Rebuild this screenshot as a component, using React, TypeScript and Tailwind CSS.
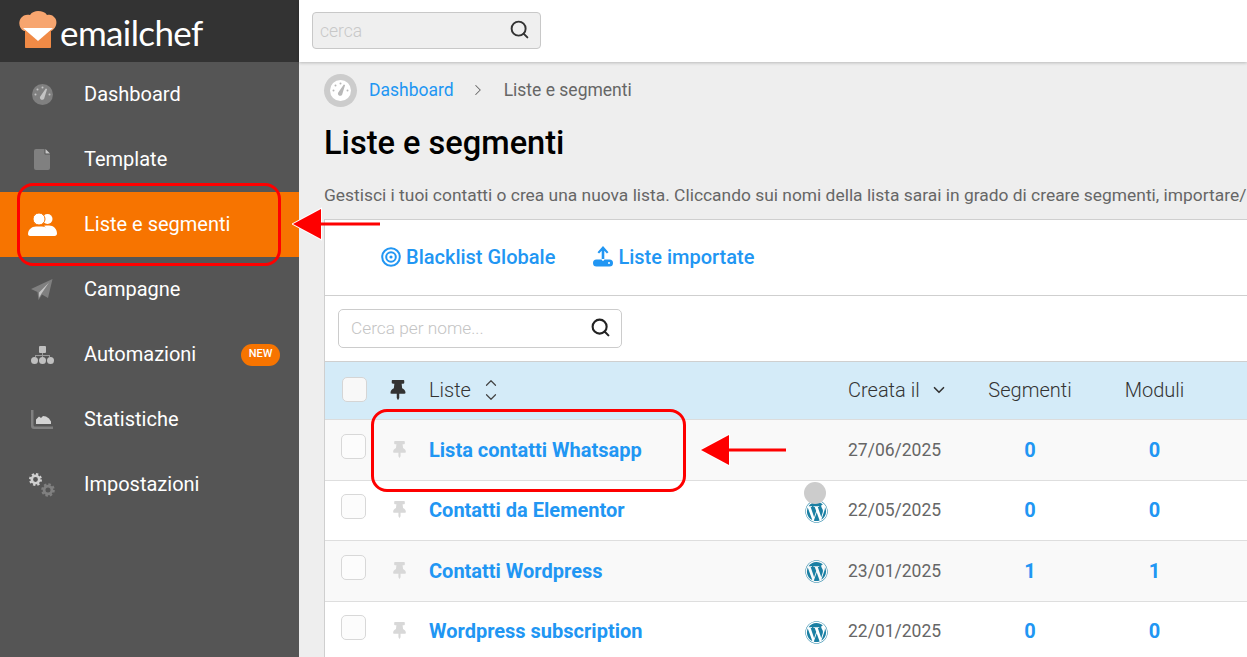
import { ChevronDown, ChevronRight, ChevronUp, Search } from 'lucide-react'
import { FaThumbtack, FaWordpress } from 'react-icons/fa'
import type { ReactNode } from 'react'

function GaugeIcon({ bg, fg }: { bg: string; fg: string }) {
    return (
        <svg width="21" height="21" viewBox="0 0 21 21">
            <circle cx="10.500" cy="10.500" r="10.500" fill={bg} />
            <g fill={fg}>
                <circle cx="10.500" cy="3.500" r="1" />
                <circle cx="5.500" cy="5.500" r="1" />
                <circle cx="3.500" cy="10.500" r="1" />
                <circle cx="17.500" cy="10.500" r="1" />
                <path d="M13.800 4.500l1.300.6-2.600 8.500a2.300 2.300 0 1 1-3.900-1.700Z" />
            </g>
        </svg>
    )
}

function FileIcon() {
    return (
        <svg width="16" height="21" viewBox="0 0 16 21">
            <path d="M2 0h8.500v4.500c0 .6.400 1 1 1H16V19a2 2 0 0 1-2 2H2a2 2 0 0 1-2-2V2a2 2 0 0 1 2-2Z" fill="#808080" />
            <path d="M11.500 0L16 4.500h-4.500Z" fill="#c8c8c8" />
        </svg>
    )
}

function UsersIcon() {
    return (
        <svg width="29" height="23" viewBox="0 0 29 23" fill="#ffffff">
            <circle cx="19.500" cy="6" r="5" />
            <path d="M21 12.500c4.500 0 8 3.500 8 8 0 1.400-1 2.500-2.400 2.500H20c.5-4-1-8-4-10.200 1.400-.2 3.300-.3 5-.3Z" />
            <circle cx="11" cy="6" r="6" stroke="#f77400" strokeWidth="1" />
            <path d="M8 13.500h6c4.400 0 8 3.400 8 7.500 0 1.100-.9 2-2 2H2c-1.100 0-2-.9-2-2 0-4.100 3.600-7.500 8-7.500Z" />
        </svg>
    )
}

function PlaneIcon() {
    return (
        <svg width="22" height="22" viewBox="0 0 22 22">
            <path d="M21.500 0L17 19l-6-3.500L7.500 21 6.500 13 0 10Z" fill="#808080" />
            <path d="M18 3.500L8 13.500l.2 5 2-3.500Z" fill="#c4c4c4" />
        </svg>
    )
}

function SitemapIcon() {
    return (
        <svg width="23" height="18" viewBox="0 0 23 18" fill="#c0c0c0">
            <rect x="8" y="0" width="7" height="7" rx="1" />
            <path d="M11 7h1v2h7v2h-1v-1H12v1h-1v-1H5v1H4V9h7Z" fill="#999999" />
            <circle cx="3.500" cy="14.500" r="3.500" />
            <circle cx="11.500" cy="14.500" r="3.500" />
            <circle cx="19.500" cy="14.500" r="3.500" />
        </svg>
    )
}

function StatsIcon() {
    return (
        <svg width="22" height="19" viewBox="0 0 22 19">
            <path d="M0 0h2.500v15c0 .8.400 1.500 1.500 1.500h18V19H3a3 3 0 0 1-3-3Z" fill="#808080" />
            <path d="M5 14V9.500L8 6.500l2 1.500 2-2 3 .5 3 2 2 3V14Z" fill="#d4d4d4" />
        </svg>
    )
}

function GearsIcon() {
    return (
        <svg width="26" height="24" viewBox="0 0 26 24" fill="none">
            <circle cx="6.500" cy="6.500" r="3.700" stroke="#d0d0d0" strokeWidth="2.600" />
            <circle cx="6.500" cy="6.500" r="5.500" stroke="#d0d0d0" strokeWidth="2" strokeDasharray="2.300 2" />
            <circle cx="19" cy="17" r="3.900" stroke="#808080" strokeWidth="2.800" />
            <circle cx="19" cy="17" r="5.800" stroke="#808080" strokeWidth="2" strokeDasharray="2.500 2" />
        </svg>
    )
}

const nav: { label: string; icon: ReactNode; active?: boolean; badge?: boolean }[] = [
    { label: 'Dashboard', icon: <GaugeIcon bg="#808080" fg="#c4c4c4" /> },
    { label: 'Template', icon: <FileIcon /> },
    { label: 'Liste e segmenti', icon: <UsersIcon />, active: true },
    { label: 'Campagne', icon: <PlaneIcon /> },
    { label: 'Automazioni', icon: <SitemapIcon />, badge: true },
    { label: 'Statistiche', icon: <StatsIcon /> },
    { label: 'Impostazioni', icon: <GearsIcon /> },
]

// even rows are a pixel shorter, their bold text sits a pixel higher
const rows = [
    { name: 'Lista contatti Whatsapp', date: '27/06/2025', seg: 0, mod: 0, wp: false, h: 'h-[61px] bg-[#f9f9f9]', t: '' },
    { name: 'Contatti da Elementor', date: '22/05/2025', seg: 0, mod: 0, wp: true, h: 'h-[60px] bg-white', t: 'mb-[2px]' },
    { name: 'Contatti Wordpress', date: '23/01/2025', seg: 1, mod: 1, wp: true, h: 'h-[61px] bg-[#f9f9f9]', t: '' },
    { name: 'Wordpress subscription', date: '22/01/2025', seg: 0, mod: 0, wp: true, h: 'h-[60px] bg-white', t: 'mb-[2px]' },
]

function Logo() {
    return (
        <div className="flex h-[62px] items-center bg-[#333333] pl-[19px]">
            <svg width="38" height="37" viewBox="0 0 38 37" className="-mt-[3px]">
                <path d="M5 20C0 18-1 11 2 7c2-3 6-4 9-3 2-3 5-4 8-4 4 0 7 1 9 4 3-1 6 0 8 3 3 4 1 11-4 13Z" fill="#f7a56f" />
                <path d="M6 17h26v19c0 .6-.4 1-1 1H7c-.6 0-1-.4-1-1Z" fill="#f08a46" />
                <path d="M4 17h30L19 30Z" fill="#ffffff" />
            </svg>
            <span className="ml-[3px] mt-[3px] font-['Lato',sans-serif] text-[35px] leading-none tracking-[-0.6px] text-white">
                emailchef
            </span>
        </div>
    )
}

function Sidebar() {
    return (
        <aside className="flex w-[299px] shrink-0 flex-col bg-[#555555]">
            <Logo />
            {nav.map((n) => (
                <div
                    key={n.label}
                    className={`flex h-[65px] items-center ${n.active ? 'bg-[#f77400]' : ''}`}
                >
                    <span className="flex w-[84px] shrink-0 items-center justify-center">{n.icon}</span>
                    <span className="mb-[2px] text-[20px] leading-none text-white">{n.label}</span>
                    {n.badge && (
                        <span className="ml-auto mr-[19px] flex h-[22px] w-[39px] items-center justify-center rounded-full bg-[#f77400] text-[11px] font-medium text-white">
                            NEW
                        </span>
                    )}
                </div>
            ))}
        </aside>
    )
}

function Topbar() {
    return (
        <header className="relative z-10 flex h-[62px] shrink-0 items-start bg-white pl-[13px] pt-[12px] shadow-[0_1px_3px_rgba(0,0,0,0.22)]">
            <div className="flex h-[37px] w-[229px] items-center justify-between rounded-[4px] border border-[#c8c8c8] bg-[#efefef] pl-[7px] pr-[10px]">
                <span className="mt-[1px] text-[17.500px] font-light text-[#c8c8c8]">cerca</span>
                <Search size={21} strokeWidth={2.2} className="mb-[2px] text-[#333333]" />
            </div>
        </header>
    )
}

function Toolbar() {
    return (
        <div className="flex h-[76px] items-center gap-[38px] border-b border-[#cfcfcf] pb-[2px] pl-[56px] text-[20px] font-medium text-[#2196f3]">
            <span className="flex items-center gap-[5px]">
                <svg width="20" height="20" viewBox="0 0 20 20" fill="none" stroke="currentColor">
                    <circle cx="10" cy="10" r="8.800" strokeWidth="2" />
                    <circle cx="10" cy="10" r="4.800" strokeWidth="2" />
                    <circle cx="10" cy="10" r="1.600" fill="currentColor" stroke="none" />
                </svg>
                Blacklist Globale
            </span>
            <span className="flex items-center gap-[5px]">
                <svg width="20" height="21" viewBox="0 0 20 21" fill="currentColor">
                    <path d="M10 0l5.500 6.200-1.600 1.400L11.300 4.800V13H8.700V4.800L6.100 7.600 4.500 6.200Z" />
                    <path d="M3.500 13.500h5.200c.2 1.700 2.400 1.700 2.600 0h5.200a3.500 3.500 0 0 1 0 7h-13a3.500 3.500 0 0 1 0-7Z" />
                    <circle cx="16" cy="17" r="1" fill="#ffffff" />
                </svg>
                Liste importate
            </span>
        </div>
    )
}

function Table() {
    const grid = 'grid grid-cols-[104px_376px_43px_122px_120px_129px_1fr] items-center'
    return (
        <div>
            <div className={`${grid} h-[58px] border-b border-[#dcdcdc] bg-[#d4ebf8] pb-[2px] text-[20px] font-light text-[#333333]`}>
                <div className="flex items-center">
                    <span className="ml-[17px] h-[25px] w-[25px] rounded-[5px] border border-[#d5d5d5] bg-[#f8f8f8]" />
                    <FaThumbtack className="ml-[21px] text-[20px] text-[#333333]" />
                </div>
                <div className="flex items-center gap-[11px]">
                    Liste
                    <span className="flex flex-col text-[#444444]">
                        <ChevronUp size={18} strokeWidth={1.600} className="-mb-[4px]" />
                        <ChevronDown size={18} strokeWidth={1.600} />
                    </span>
                </div>
                <div />
                <div className="flex items-center gap-[10px]">
                    Creata il
                    <ChevronDown size={18} strokeWidth={2.200} />
                </div>
                <div className="text-center">Segmenti</div>
                <div className="text-center">Moduli</div>
            </div>
            {rows.map((r) => (
                <div key={r.name} className={`${grid} ${r.h} border-b border-[#dedede]`}>
                    <div className="flex items-center">
                        <span className="mb-[8px] ml-[16px] h-[25px] w-[25px] rounded-[5px] border border-[#d8d8d8] bg-[#fcfcfc]" />
                        <FaThumbtack className="mb-[2px] ml-[25px] text-[17px] text-[#d8d8d8]" />
                    </div>
                    <div className={`${r.t} text-[20px] font-bold text-[#2196f3]`}>{r.name}</div>
                    <div>{r.wp && <FaWordpress className="mt-[1px] text-[23px] text-[#1a7fa3]" />}</div>
                    <div className="text-[17.500px] text-[#666666]">{r.date}</div>
                    <div className={`${r.t} text-center text-[20px] font-bold text-[#2196f3]`}>{r.seg}</div>
                    <div className={`${r.t} text-center text-[20px] font-bold text-[#2196f3]`}>{r.mod}</div>
                </div>
            ))}
        </div>
    )
}

function Main() {
    return (
        <main className="flex min-w-0 flex-1 flex-col bg-[#eeeeee]">
            <Topbar />
            <div className="min-h-0 flex-1 overflow-hidden pl-[25px]">
                <div className="flex h-[56px] items-center">
                    <span className="flex h-[33px] w-[33px] items-center justify-center rounded-full bg-[#cccccc]">
                        <GaugeIcon bg="#ffffff" fg="#b8b8b8" />
                    </span>
                    <span className="ml-[12px] text-[17.500px] text-[#2196f3]">Dashboard</span>
                    <ChevronRight size={18} strokeWidth={1.400} className="ml-[15px] text-[#666666]" />
                    <span className="ml-[17px] text-[17.500px] text-[#666666]">Liste e segmenti</span>
                </div>
                <h1 className="mt-[6px] text-[32.600px] leading-[38px] font-medium text-black">Liste e segmenti</h1>
                <p className="mt-[21px] text-[17.400px] leading-[24px] whitespace-nowrap text-[#666666]">
                    Gestisci i tuoi contatti o crea una nuova lista. Cliccando sui nomi della lista sarai in grado di creare segmenti, importare/
                </p>
                <section className="mt-[12px] border-t border-l border-[#cfcfcf] bg-white">
                    <Toolbar />
                    <div className="flex h-[66px] items-center border-b border-[#cfcfcf] pl-[13px]">
                        <div className="flex h-[39px] w-[284px] items-center justify-between rounded-[5px] border border-[#cccccc] bg-white pl-[12px] pr-[10px]">
                            <span className="text-[17.300px] font-light text-[#c4c4c4]">Cerca per nome...</span>
                            <Search size={21} strokeWidth={2.400} className="mb-[2px] text-[#222222]" />
                        </div>
                    </div>
                    <Table />
                </section>
            </div>
        </main>
    )
}

function Arrow({ className, length }: { className: string; length: number }) {
    return (
        <svg width={length} height="40" viewBox={`0 0 ${length} 40`} className={className}>
            <path d="M29 5 L29 35 L1 20 Z" fill="#fe0000" stroke="#ffffff" strokeWidth="2" paintOrder="stroke" />
            <rect x="28" y="18.500" width={length - 28} height="3" fill="#fe0000" />
        </svg>
    )
}

export default function App() {
    return (
        <div className="relative flex h-[657px] w-[1247px] overflow-hidden font-['Roboto',sans-serif]">
            <Sidebar />
            <Main />
            <div className="absolute top-[183px] left-[17px] h-[83px] w-[264px] rounded-[16px] border-[3px] border-[#fe0000]" />
            <div className="absolute top-[409px] left-[371px] h-[83px] w-[315px] rounded-[16px] border-[3px] border-[#fe0000]" />
            <Arrow className="absolute top-[204px] left-[292px]" length={88} />
            <Arrow className="absolute top-[430px] left-[700px]" length={86} />
            <div className="absolute top-[482px] left-[804px] h-[22px] w-[22px] rounded-full bg-[#cccccc]" />
        </div>
    )
}
